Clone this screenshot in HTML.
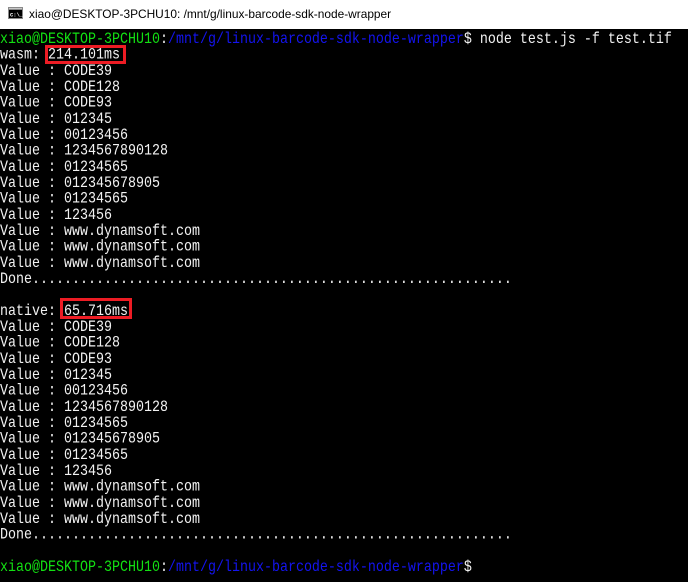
<!DOCTYPE html>
<html><head><meta charset="utf-8"><style>
html,body{margin:0;padding:0;width:688px;height:582px;overflow:hidden;background:#fff}
#t{position:absolute;left:29px;top:6px;font:11.9px/16px "Liberation Sans",sans-serif;color:#000;white-space:nowrap}
#b{position:absolute;left:0;top:29px;width:688px;height:553px;background:#000}
pre{position:absolute;left:0;top:32px;margin:0;font:13.33px/13.333px "Liberation Mono",monospace;color:#f2f2f2;letter-spacing:0;white-space:pre;transform:scaleY(1.2);transform-origin:0 0}
i{font-style:normal}.g{color:#13e013}.u{color:#1414f0}
.r{position:absolute;border:3px solid #ed1c24;box-sizing:border-box}
#p{position:absolute;left:0;top:560px;font:13.33px/13.333px "Liberation Mono",monospace;color:#f2f2f2;white-space:pre;transform:scaleY(1.2);transform-origin:0 0}
</style></head><body>
<svg style="position:absolute;left:8px;top:7px" width="15" height="13" viewBox="0 0 15 13"><rect x="0" y="0" width="15" height="12" fill="#8a8a8a"/><rect x="1" y="3" width="13" height="8" fill="#000"/><rect x="1" y="1" width="13" height="1" fill="#c8c8c8"/><text x="2" y="9.5" font-family="Liberation Mono" font-size="5.5" font-weight="bold" fill="#fff">C:\_</text></svg>
<div id="t">xiao@DESKTOP-3PCHU10: /mnt/g/linux-barcode-sdk-node-wrapper</div>
<div id="b"></div>
<pre><i class="g">xiao@DESKTOP-3PCHU10</i>:<i class="u">/mnt/g/linux-barcode-sdk-node-wrapper</i>$ node test.js -f test.tif
wasm: 214.101ms
Value : CODE39
Value : CODE128
Value : CODE93
Value : 012345
Value : 00123456
Value : 1234567890128
Value : 01234565
Value : 012345678905
Value : 01234565
Value : 123456
Value : www.dynamsoft.com
Value : www.dynamsoft.com
Value : www.dynamsoft.com
Done............................................................

native: 65.716ms
Value : CODE39
Value : CODE128
Value : CODE93
Value : 012345
Value : 00123456
Value : 1234567890128
Value : 01234565
Value : 012345678905
Value : 01234565
Value : 123456
Value : www.dynamsoft.com
Value : www.dynamsoft.com
Value : www.dynamsoft.com
Done............................................................</pre>
<div id="p"><i class="g">xiao@DESKTOP-3PCHU10</i>:<i class="u">/mnt/g/linux-barcode-sdk-node-wrapper</i>$</div>
<div class="r" style="left:45px;top:45px;width:81px;height:19px"></div>
<div class="r" style="left:60px;top:298px;width:72px;height:21px"></div>
</body></html>
